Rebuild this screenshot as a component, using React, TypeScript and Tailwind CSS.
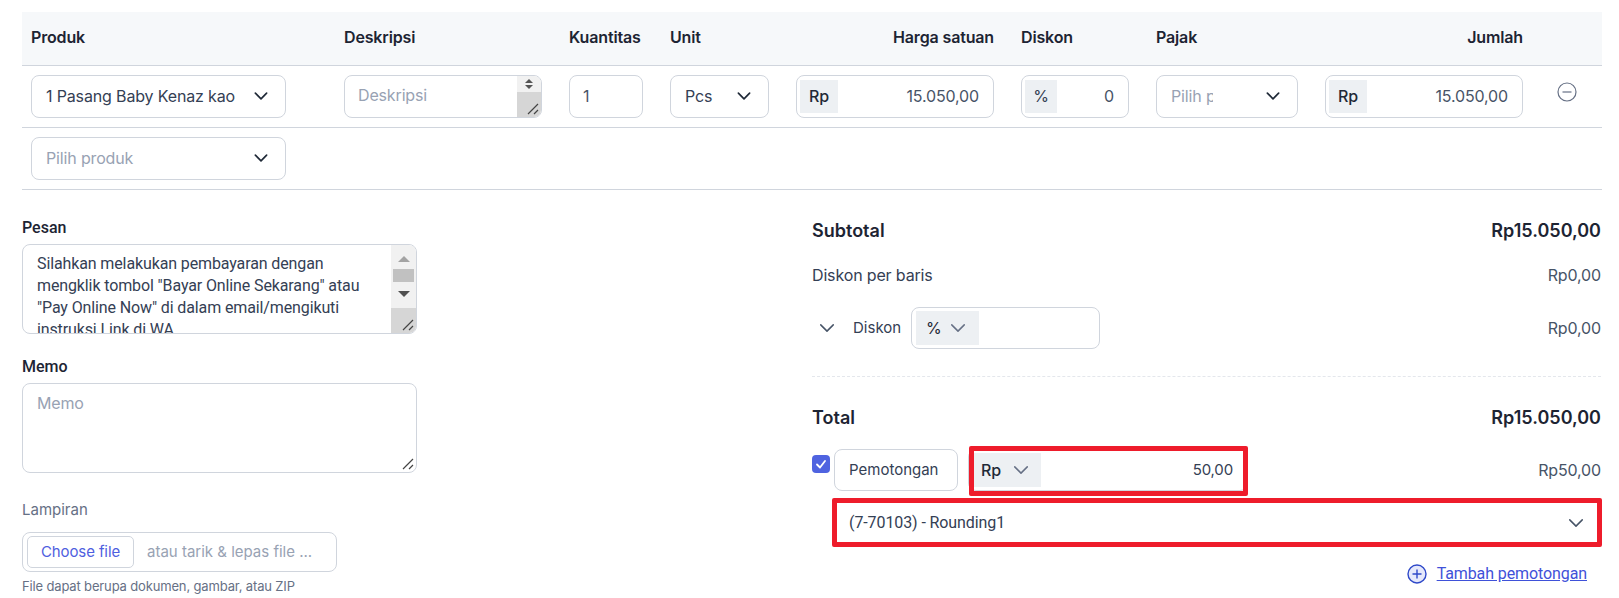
import React from "react";

const Chevron = ({ className = "", sw = 1.5 }: { className?: string; sw?: number }) => (
  <svg viewBox="0 0 16 16" fill="none" stroke="currentColor" strokeWidth={sw} strokeLinecap="round" strokeLinejoin="round" className={className}>
    <path d="M3 5.5 8 10.5 13 5.5" />
  </svg>
);

const Grip = () => (
  <svg viewBox="0 0 12 12" fill="none" stroke="#444" strokeWidth="1.2" className="absolute right-[2px] bottom-[2px] w-3 h-3">
    <path d="M1 11 11 1M7 11 11 7" />
  </svg>
);

const box = "border border-[#d0d5dd] rounded-lg bg-white";

const Select = ({ text, muted, w, clip }: { text: string; muted?: boolean; w: string; clip?: boolean }) => (
  <div className={`${box} ${w} shrink-0 h-[43px] flex items-center justify-between pl-[14px] pr-[15px] pb-[2px] ${muted ? "text-[#98a2b3]" : "text-[#344054]"}`}>
    <span className={clip ? "w-[42px] overflow-hidden whitespace-nowrap" : "whitespace-nowrap"}>{text}</span>
    <Chevron className="w-[18px] h-[18px] text-[#1f2937]" />
  </div>
);

const MoneyInput = ({ prefix, value }: { prefix: string; value: string }) => (
  <div className={`${box} w-[198px] shrink-0 h-[43px] flex items-center pl-[3px] pr-[14px]`}>
    <span className="w-[38px] h-[33px] pb-[2px] bg-[#edf0f3] flex items-center justify-center font-medium text-[#1f2937]">{prefix}</span>
    <span className="flex-1 pb-[2px] text-right text-[#475467]">{value}</span>
  </div>
);

export default function App() {
  return (
    <div className="w-[1619px] h-[598px] overflow-hidden bg-white text-[#1f2937] font-['Inter',sans-serif] text-base tracking-[-0.15px]">
      <div className="pt-3 ml-[22px] w-[1580px]">
        <div className="h-[54px] pb-[3px] bg-[#f6f8fa] border-b border-[#d0d5dd] pl-[9px] flex items-center gap-[27px] font-semibold text-[#1d2433]">
          <span className="w-[286px] shrink-0">Produk</span>
          <span className="w-[198px] shrink-0">Deskripsi</span>
          <span className="w-[74px] shrink-0 whitespace-nowrap">Kuantitas</span>
          <span className="w-[99px] shrink-0">Unit</span>
          <span className="w-[198px] shrink-0 text-right">Harga satuan</span>
          <span className="w-[108px] shrink-0">Diskon</span>
          <span className="w-[142px] shrink-0">Pajak</span>
          <span className="w-[198px] shrink-0 text-right">Jumlah</span>
        </div>
        <div className="h-[62px] border-b border-[#d0d5dd] pl-[9px] flex items-center gap-[27px]">
          <div className="w-[286px] shrink-0">
            <Select w="w-[255px]" text="1 Pasang Baby Kenaz kao" />
          </div>
          <div className={`${box} relative w-[198px] shrink-0 h-[43px] pl-[13px] pt-[8px] leading-[22px] text-[#98a2b3] overflow-hidden`}>
            Deskripsi
            <div className="absolute right-0 top-0 bottom-0 w-[24px] bg-[#f1f1f1]">
              <div className="h-[16px] flex flex-col items-center justify-center gap-[2px]">
                <svg viewBox="0 0 8 4" className="w-2 h-1"><path d="M0 4 4 0 8 4Z" fill="#555" /></svg>
                <svg viewBox="0 0 8 4" className="w-2 h-1"><path d="M0 0 8 0 4 4Z" fill="#555" /></svg>
              </div>
              <div className="h-[27px] bg-[#d6d6d6]" />
            </div>
            <Grip />
          </div>
          <div className={`${box} w-[74px] shrink-0 h-[43px] pb-[2px] flex items-center px-[13px] text-[#475467]`}>1</div>
          <Select w="w-[99px]" text="Pcs" />
          <MoneyInput prefix="Rp" value="15.050,00" />
          <div className={`${box} w-[108px] shrink-0 h-[43px] flex items-center pl-[3px] pr-[14px]`}>
            <span className="w-[32px] h-[33px] pb-[2px] bg-[#edf0f3] flex items-center justify-center text-[#344054]">%</span>
            <span className="flex-1 pb-[2px] text-right text-[#475467]">0</span>
          </div>
          <Select w="w-[142px]" text="Pilih produk" muted clip />
          <MoneyInput prefix="Rp" value="15.050,00" />
          <svg viewBox="0 0 20 20" fill="none" stroke="#667085" strokeWidth="1.2" className="w-5 h-5 ml-[7px] -mt-[10px] shrink-0">
            <circle cx="10" cy="10" r="9" />
            <path d="M5.5 10h9" />
          </svg>
        </div>
        <div className="h-[62px] border-b border-[#d0d5dd] pl-[9px] flex items-center">
          <Select w="w-[255px]" text="Pilih produk" muted />
        </div>
      </div>

      <div className="flex pt-[29px] pl-[22px]">
        <div className="w-[395px] shrink-0">
          <div className="font-['Roboto',sans-serif] font-medium leading-[18px] h-[25px] text-[#1d2433] tracking-normal">Pesan</div>
          <div className={`${box} relative h-[90px] overflow-hidden pl-[14px] pr-[34px] pt-[8px] font-['Roboto',sans-serif] leading-[22px] text-[#344054] tracking-[-0.12px]`}>
            <div>Silahkan melakukan pembayaran dengan mengklik tombol "Bayar Online Sekarang" atau "Pay Online Now" di dalam email/mengikuti instruksi Link di WA</div>
            <div className="absolute right-0 top-0 bottom-0 w-[25px] bg-[#f1f1f1]">
              <div className="flex flex-col items-center pt-[11px]">
                <svg viewBox="0 0 12 6" className="w-3 h-[6px]"><path d="M0 6 6 0 12 6Z" fill="#a3a3a3" /></svg>
                <div className="w-[21px] h-[13px] bg-[#c1c1c1] mt-[7px]" />
                <svg viewBox="0 0 12 6" className="w-3 h-[6px] mt-[9px]"><path d="M0 0 12 0 6 6Z" fill="#505050" /></svg>
              </div>
              <div className="absolute left-0 right-0 bottom-0 h-[25px] bg-[#d6d6d6]" />
            </div>
            <Grip />
          </div>
          <div className="font-['Roboto',sans-serif] font-medium leading-[22px] mt-[22px] h-[27px] text-[#1d2433] tracking-normal">Memo</div>
          <div className={`${box} relative h-[90px] pl-[14px] pt-[8px] leading-[22px] text-[#98a2b3]`}>
            Memo
            <Grip />
          </div>
          <div className="mt-[26px] text-[15px] leading-[22px] tracking-normal text-[#667085]">Lampiran</div>
          <div className={`${box} mt-[11px] w-[315px] h-[40px] flex items-center pl-[4px] tracking-normal`}>
            <span className="w-[107px] h-[32px] border border-[#d0d5dd] rounded-[5px] flex items-center justify-center text-[15px] tracking-[-0.1px] text-[#4f5fe0]">Choose file</span>
            <span className="ml-[13px] text-[#98a2b3] text-[15px] whitespace-nowrap">atau tarik &amp; lepas file ...</span>
          </div>
          <div className="mt-[5px] text-[13px] text-[#667085] whitespace-nowrap">File dapat berupa dokumen, gambar, atau ZIP</div>
        </div>

        <div className="ml-[395px] w-[789px] shrink-0">
          <div className="flex justify-between items-center h-[24px] text-lg font-semibold tracking-normal text-[#1d2433]">
            <span>Subtotal</span>
            <span>Rp15.050,00</span>
          </div>
          <div className="flex justify-between items-center mt-[21px] h-[22px] text-[#344054]">
            <span>Diskon per baris</span>
            <span className="text-[#475467]">Rp0,00</span>
          </div>
          <div className="flex items-center justify-between mt-[21px] h-[42px]">
            <div className="flex items-center">
              <Chevron sw={1.2} className="w-[20px] h-[20px] ml-[5px] text-[#475467]" />
              <span className="ml-[16px] w-[48px] text-[15px] tracking-normal text-[#344054]">Diskon</span>
              <div className={`${box} ml-[10px] w-[189px] h-[42px] flex items-center pl-[4px]`}>
                <span className="w-[63px] h-[34px] bg-[#edf0f3] flex items-center pl-[10px] gap-[6px] text-[#1f2937]">
                  % <Chevron sw={1.2} className="w-[20px] h-[20px] text-[#667085]" />
                </span>
              </div>
            </div>
            <span className="text-[#475467]">Rp0,00</span>
          </div>
          <div className="mt-[27px] border-t border-dashed border-[#e4e7ec]" />
          <div className="flex justify-between items-center h-[24px] mt-[29px] text-lg font-semibold tracking-normal text-[#1d2433]">
            <span>Total</span>
            <span>Rp15.050,00</span>
          </div>
          <div className="flex items-center justify-between mt-[19px] h-[42px]">
            <div className="flex items-start h-full">
              <span className="w-[18px] h-[18px] mt-[6px] rounded-[4px] bg-[#4f63e0] flex items-center justify-center">
                <svg viewBox="0 0 12 12" fill="none" stroke="#fff" strokeWidth="1.8" strokeLinecap="round" strokeLinejoin="round" className="w-3 h-3"><path d="M2 6.5 5 9.5 10 3" /></svg>
              </span>
              <span className={`${box} ml-[4px] w-[124px] h-[42px] flex items-center pl-[14px] text-[#344054] text-[15px] tracking-normal`}>Pemotongan</span>
              <div className={`${box} relative ml-[10px] w-[280px] h-[42px] flex items-center pl-[5px] pr-[14px]`}>
                <span className="w-[67px] h-[34px] bg-[#edf0f3] flex items-center pl-[7px] gap-[10px] font-medium text-[#1f2937]">
                  Rp <Chevron sw={1.2} className="w-[20px] h-[20px] text-[#667085] shrink-0" />
                </span>
                <span className="flex-1 text-right text-[15px] text-[#344054]">50,00</span>
                <div className="absolute left-0 -right-px -top-[4px] -bottom-[6px] border-[5px] border-[#ee1c2b] rounded-[2px]" />
              </div>
            </div>
            <span className="text-[#475467]">Rp50,00</span>
          </div>
          <div className="ml-[20px] mt-[7px] w-[770px] h-[49px] flex items-center justify-between pl-[12px] pr-[11px] font-['Roboto',sans-serif] tracking-[-0.1px] text-[#344054] border-[5px] border-[#ee1c2b] rounded-[2px]">
            <span>(7-70103) - Rounding1</span>
            <Chevron sw={1.2} className="w-[20px] h-[20px] text-[#475467]" />
          </div>
          <div className="flex justify-end items-center gap-[10px] mt-[15px] pr-[14px] font-['Roboto',sans-serif] tracking-[-0.1px] text-[#3f51d9]">
            <svg viewBox="0 0 20 20" fill="#e6e9fb" stroke="#2f49c9" strokeWidth="1.4" className="w-5 h-5">
              <circle cx="10" cy="10" r="9" />
              <path d="M10 5.5v9M5.5 10h9" />
            </svg>
            <span className="underline">Tambah pemotongan</span>
          </div>
        </div>
      </div>
    </div>
  );
}
